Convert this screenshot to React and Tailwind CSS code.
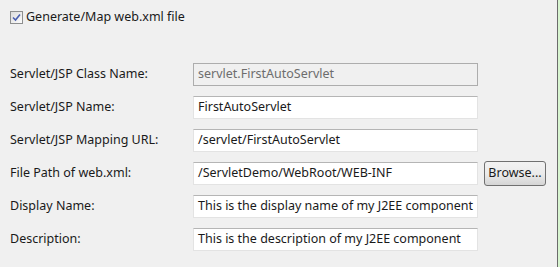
export default function App() {
  const rows = [
    { label: "Servlet/JSP Class Name:", value: "servlet.FirstAutoServlet", disabled: true },
    { label: "Servlet/JSP Name:", value: "FirstAutoServlet" },
    { label: "Servlet/JSP Mapping URL:", value: "/servlet/FirstAutoServlet" },
    { label: "File Path of web.xml:", value: "/ServletDemo/WebRoot/WEB-INF", browse: true },
    { label: "Display Name:", value: "This is the display name of my J2EE component" },
    { label: "Description:", value: "This is the description of my J2EE component" },
  ];
  return (
    <div className="w-[560px] h-[267px] bg-[#f0f0f0] flex text-[12.5px] text-[#1a1a1a]" style={{ fontFamily: '"Noto Sans", "Liberation Sans", sans-serif' }}>
      <div className="flex-1 flex flex-col">
        <div className="flex items-center h-[13px] mt-[11px] ml-[10px] gap-[3px]">
          <div className="w-[13px] h-[13px] border border-[#8e8f8f] bg-gradient-to-br from-[#dcdcdc] to-[#fcfcfc] flex items-center justify-center">
            <svg width="9" height="9" viewBox="0 0 9 9">
              <path d="M1 4.5 L3.5 7 L8 1.5" fill="none" stroke="#4a5fb0" strokeWidth="1.6" />
            </svg>
          </div>
          <span className="leading-none">Generate/Map web.xml file</span>
        </div>
        <div className="flex flex-col mt-[39px] gap-[10px]">
          {rows.map((r, i) => (
            <div key={i} className="flex items-center h-[23px]">
              <div className="w-[193px] pl-[10px] shrink-0">{r.label}</div>
              <div
                className={
                  "w-[285px] h-[23px] px-[4px] flex items-center border " +
                  (r.disabled
                    ? "bg-[#f0f0f0] border-[#adadad] text-[#6d6d6d]"
                    : "bg-white border-[#e3e3e3] border-t-[#b5b5b5]")
                }
              >
                {r.value}
              </div>
              {r.browse && (
                <button className="ml-[6px] w-[62px] h-[25px] rounded-[3px] border border-[#707070] bg-gradient-to-b from-[#f2f2f2] via-[#ebebeb] to-[#d5d5d5] text-[12.5px]">
                  Browse...
                </button>
              )}
            </div>
          ))}
        </div>
      </div>
      <div className="w-[1px] bg-[#6b6b6b]" />
      <div className="w-[2px] bg-[#d8f5d0]" />
    </div>
  );
}
